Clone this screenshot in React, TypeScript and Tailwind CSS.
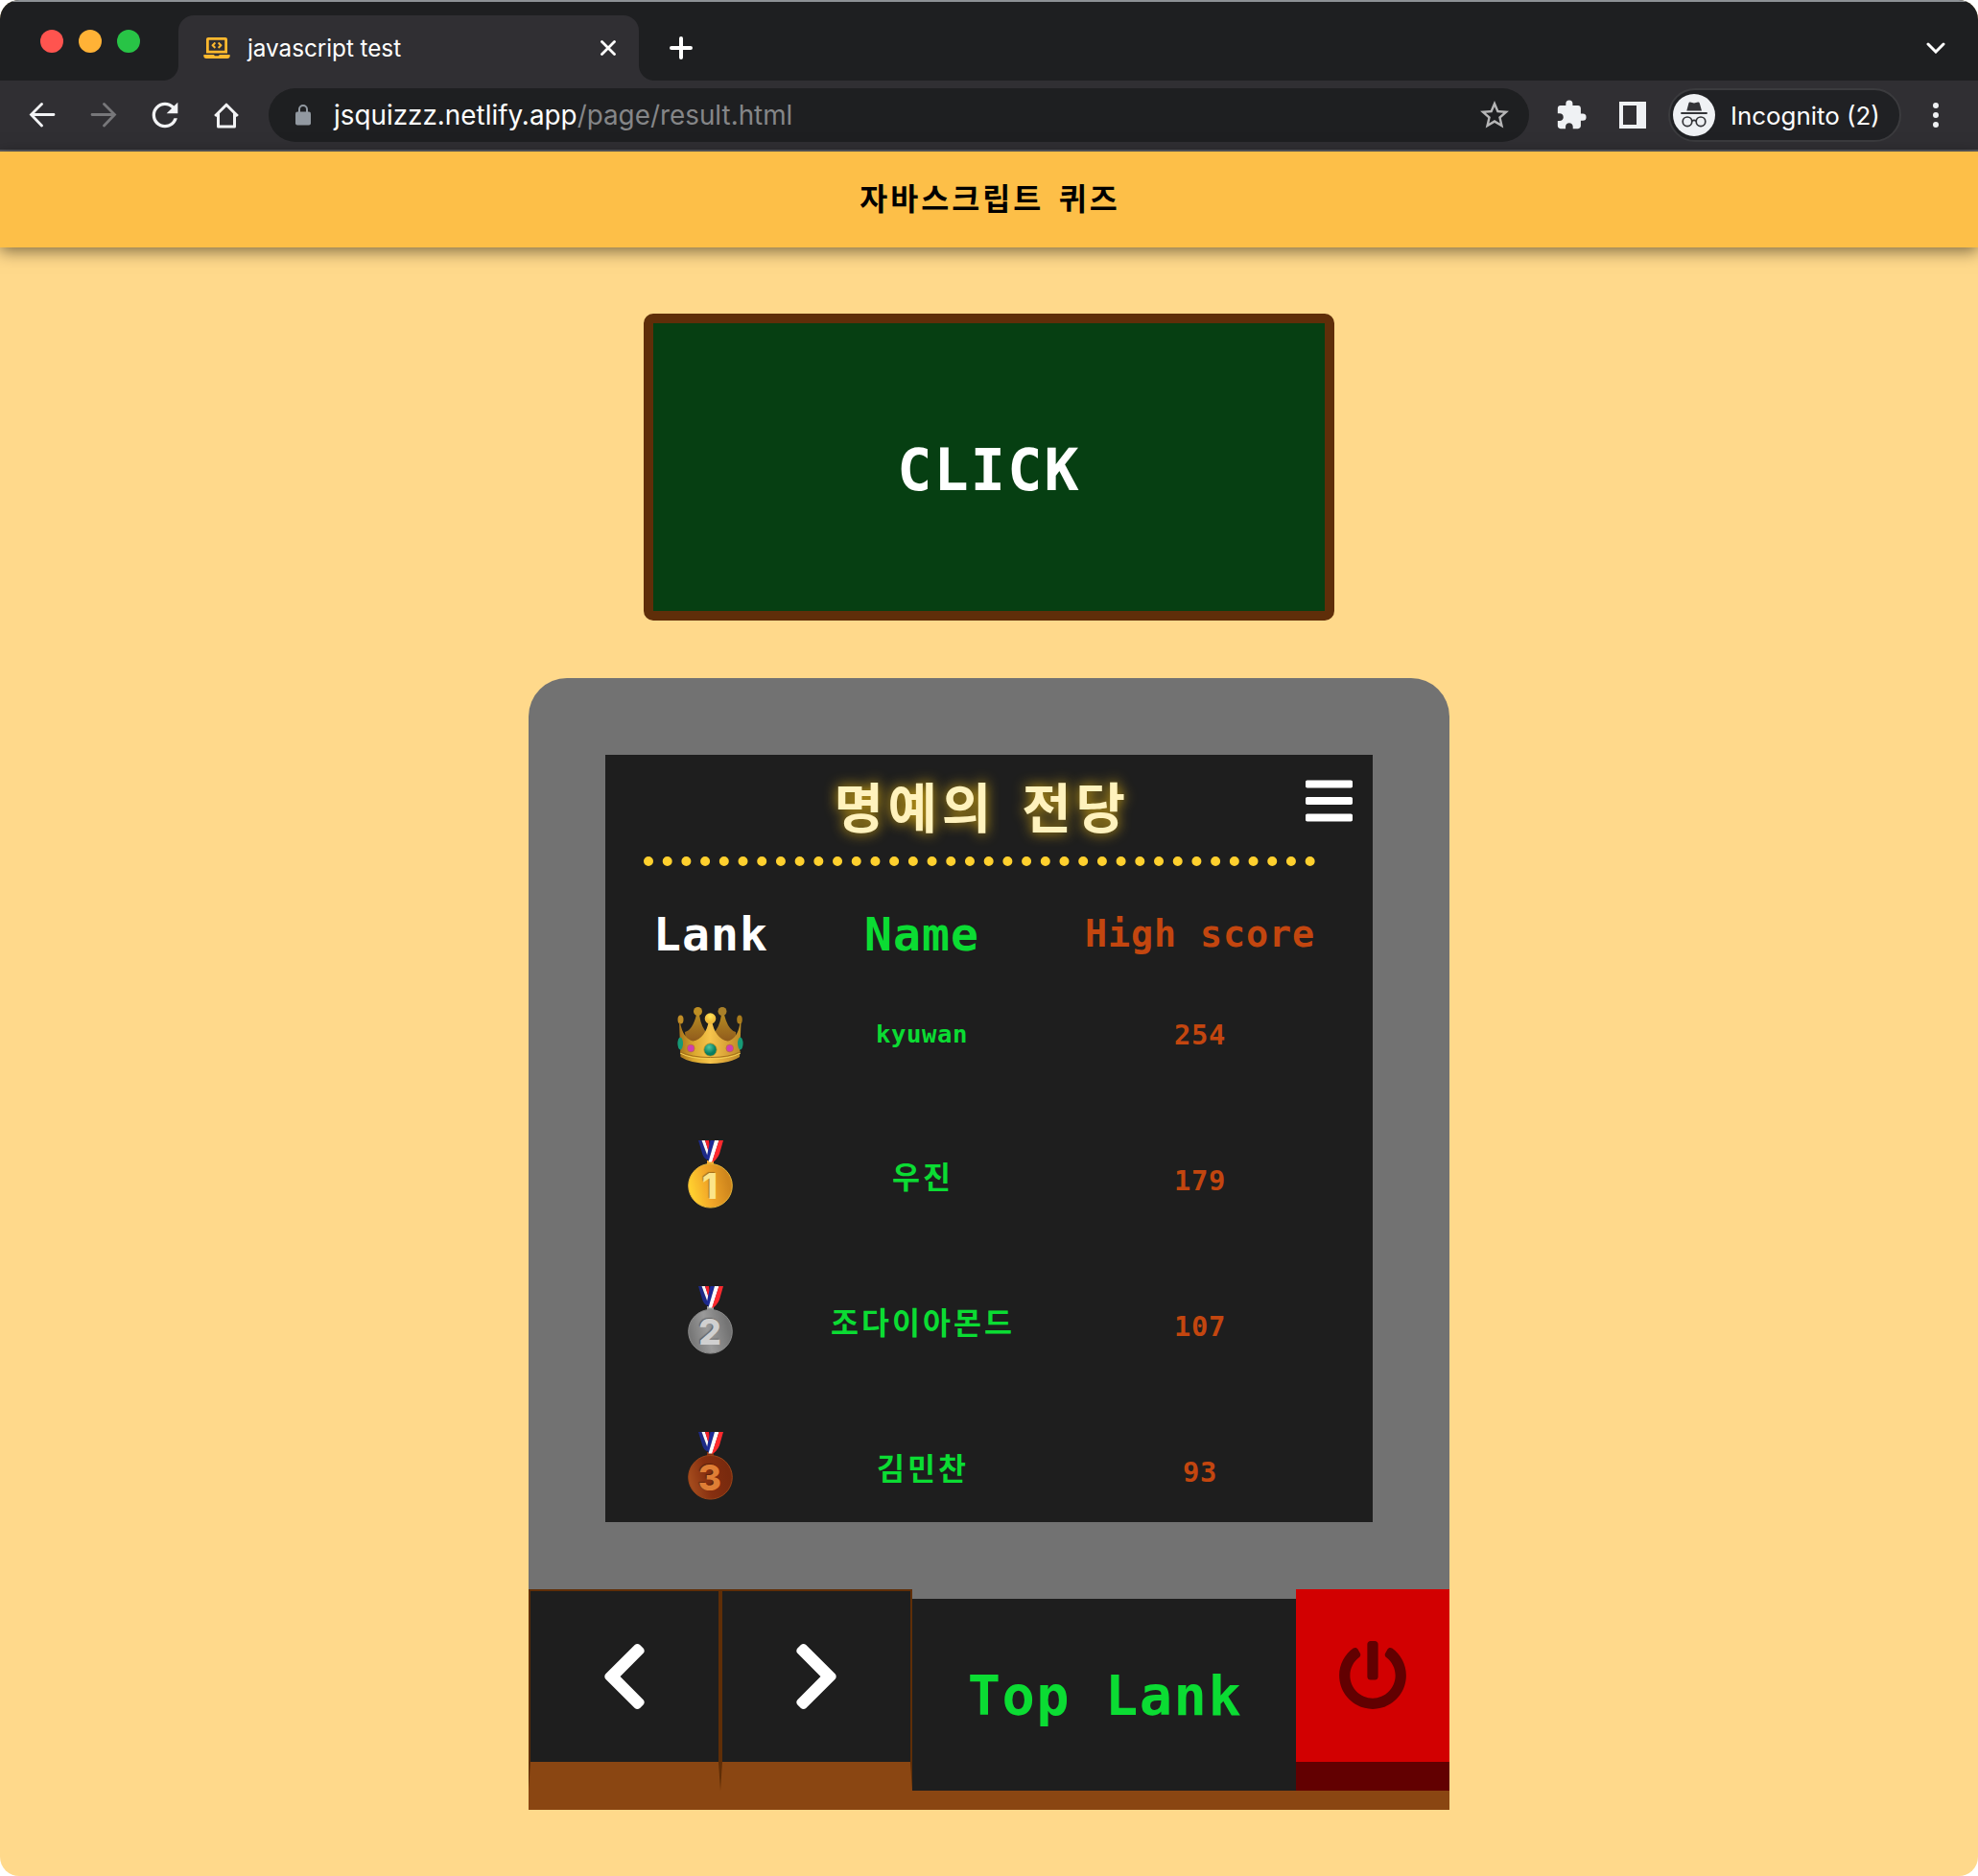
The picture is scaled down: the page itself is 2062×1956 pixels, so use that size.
import type { ReactNode } from "react";
import { FaBars, FaChevronLeft, FaChevronRight, FaLaptopCode, FaPowerOff } from "react-icons/fa";
import { MdExtension, MdOutlineStarBorder, MdRefresh } from "react-icons/md";

const MONO = "font-['DejaVu_Sans_Mono','Noto_Sans_CJK_KR',monospace]";
const HANGUL = "font-['Noto_Sans_CJK_KR',sans-serif]";
const UI = "font-['Inter',sans-serif]";

function TabStrip() {
  return (
    <div className="flex h-[84px] border-t-2 border-[#8d9195] bg-[#1e1f21]">
      <div className="flex w-[186px] items-start gap-4 pl-[42px] pt-[29px]">
        <span className="size-6 rounded-full bg-[#ff544f]" />
        <span className="size-6 rounded-full bg-[#ffb236]" />
        <span className="size-6 rounded-full bg-[#28c446]" />
      </div>
      <div className="relative mt-[14px] flex h-[68px] w-[480px] items-center rounded-t-2xl bg-[#302f33] pl-[26px] pr-6">
        <span className="absolute -left-4 bottom-0 size-4 bg-[radial-gradient(circle_at_0_0,#1e1f21_15.5px,#302f33_16.5px)]" />
        <span className="absolute -right-4 bottom-0 size-4 bg-[radial-gradient(circle_at_100%_0,#1e1f21_15.5px,#302f33_16.5px)]" />
        <FaLaptopCode className="h-[22px] w-[28px] text-[#ffb92e]" />
        <span className={`ml-[18px] text-[24.300px] leading-8 tracking-[-0.050px] text-white ${UI}`}>javascript test</span>
        <svg className="ml-auto size-4" viewBox="0 0 16 16" stroke="#fff" strokeWidth="2.8" strokeLinecap="round">
          <path d="M1.5 1.5l13 13M14.5 1.5l-13 13" />
        </svg>
      </div>
      <svg className="ml-8 mt-9 size-6" viewBox="0 0 24 24" stroke="#fff" strokeWidth="4" strokeLinecap="round">
        <path d="M12 2v20M2 12h20" />
      </svg>
      <svg className="ml-auto mr-[34px] mt-[42px] h-3 w-5" viewBox="0 0 20 12" fill="none" stroke="#fff" strokeWidth="3">
        <path d="M2 2l8 8 8-8" strokeLinecap="round" />
      </svg>
    </div>
  );
}

function IncognitoFace() {
  return (
    <svg className="size-11" viewBox="0 0 44 44">
      <circle cx="22" cy="22" r="22" fill="#eff1f4" />
      <path d="M18 8.6l4 1 4-1c1 0 1.6.5 1.9 1.4L30 17.5H14.300L16.300 10c.3-.9.800-1.400 1.700-1.400z" fill="#333438" />
      <path d="M8.300 20h27.400" stroke="#333438" strokeWidth="2" />
      <g fill="none" stroke="#333438" strokeWidth="1.700">
        <circle cx="15" cy="28.800" r="4.800" />
        <circle cx="29" cy="28.800" r="4.800" />
        <path d="M19.800 28.200q2.200-1.600 4.400 0" />
      </g>
    </svg>
  );
}

function Toolbar() {
  return (
    <div className="flex h-[74px] items-center border-b-2 border-[#5b5c60] bg-[#302f33]">
      <svg className="ml-[30px] h-[26px] w-7" viewBox="0 0 28 26" fill="none" stroke="#f2f3f5" strokeWidth="2.800" strokeLinecap="round">
        <path d="M26 12.500H3M13.500 1.500L2.500 12.500l11 11.500" />
      </svg>
      <svg className="ml-9 h-[26px] w-7" viewBox="0 0 28 26" fill="none" stroke="#77777a" strokeWidth="2.800" strokeLinecap="round">
        <path d="M2 12.500h23M14.500 1.500l11 11-11 11.500" />
      </svg>
      <MdRefresh className="ml-[30px] size-10 text-[#f2f3f5]" />
      <svg className="ml-[31px] h-[27px] w-[26px]" viewBox="0 0 26 27" fill="none" stroke="#f2f3f5" strokeWidth="3">
        <path d="M1.200 14L13 2.200 24.800 14M4.500 11.500v13.400h17V11.500" strokeLinejoin="round" />
      </svg>
      <div className="ml-[31px] flex h-14 w-[1314px] items-center rounded-full bg-[#1e1f21] pl-7 pr-[18px]">
        <svg className="h-[22px] w-4" viewBox="0 0 16 22">
          <path d="M4 9V5a4 4 0 0 1 8 0v4" fill="none" stroke="#9299a1" strokeWidth="2" />
          <rect y="7.500" width="16" height="14" rx="2" fill="#9299a1" />
        </svg>
        <span className={`ml-6 text-[27.850px] leading-10 text-white ${UI}`}>
          jsquizzz.netlify.app<span className="text-[#858688]">/page/result.html</span>
        </span>
        <MdOutlineStarBorder className="ml-auto size-9 text-[#b6b6b7]" />
      </div>
      <MdExtension className="ml-[27px] size-[34px] text-[#eff1f4]" />
      <svg className="ml-[33px] size-7" viewBox="0 0 28 28">
        <path fill="#eff1f4" fillRule="evenodd" d="M0 0h28v28H0zM4 4v20h14V4z" />
      </svg>
      <div className="ml-[23px] flex h-14 w-[243px] items-center rounded-full border-2 border-[#3b3b3e] bg-[#202124] pl-[3px]">
        <IncognitoFace />
        <span className={`ml-4 whitespace-nowrap pt-0.5 text-[25.900px] leading-10 text-white ${UI}`}>Incognito (2)</span>
      </div>
      <div className="ml-[33px] flex flex-col gap-1">
        <span className="size-1.5 rounded-full bg-[#eff1f4]" />
        <span className="size-1.5 rounded-full bg-[#eff1f4]" />
        <span className="size-1.5 rounded-full bg-[#eff1f4]" />
      </div>
    </div>
  );
}

function Crown() {
  return (
    <svg className="mr-px h-[59px] w-[69px]" viewBox="0 0 69 59">
      <defs>
        <linearGradient id="crownFront" x1="0" x2="1">
          <stop offset="0" stopColor="#a8731a" />
          <stop offset=".25" stopColor="#dca92f" />
          <stop offset=".5" stopColor="#f6c44c" />
          <stop offset=".8" stopColor="#d69f35" />
          <stop offset="1" stopColor="#b98a25" />
        </linearGradient>
        <linearGradient id="crownBack" x1="0" x2="0" y1="0" y2="1">
          <stop offset="0" stopColor="#b58a22" />
          <stop offset="1" stopColor="#8f5a1c" />
        </linearGradient>
        <radialGradient id="crownBall" cx=".5" cy=".3">
          <stop offset="0" stopColor="#ffe75a" />
          <stop offset="1" stopColor="#eeb93a" />
        </radialGradient>
        <radialGradient id="crownEmerald" cx=".4" cy=".3">
          <stop offset="0" stopColor="#4fc79f" />
          <stop offset="1" stopColor="#087d60" />
        </radialGradient>
      </defs>
      <path d="M8 26q8-2 12-18h3q2 14 9 20l3 8H9zM61 26q-8-2-12-18h-3q-2 14-9 20l-1 8h26z" fill="url(#crownBack)" />
      <circle cx="21.500" cy="4.500" r="4.500" fill="#bd8e23" />
      <circle cx="47" cy="4.500" r="4.500" fill="#a98029" />
      <ellipse cx="3.500" cy="13" rx="3" ry="4.500" fill="#c08d27" />
      <ellipse cx="65" cy="13" rx="2.800" ry="4.500" fill="#a97b1c" />
      <path
        d="M3 16q3 17 13.500 19.500C25 34 31 26 33 14h3c2 12 8 20 16.500 21.500C60 34 64 27 65.500 16h1l-1.500 36q-10 7-30.500 7T3.500 52L2 16z"
        fill="url(#crownFront)"
      />
      <path d="M3 48q11 6 31.500 6T66 48" fill="none" stroke="#f3cf52" strokeWidth="1" />
      <path d="M3 46.500q11 6 31.500 6T66 46.500" fill="none" stroke="#a8731a" strokeWidth="1" />
      <circle cx="34.500" cy="12" r="5.800" fill="url(#crownBall)" />
      <circle cx="34.500" cy="44.500" r="6.700" fill="url(#crownEmerald)" stroke="#c99424" strokeWidth=".8" />
      <circle cx="14.200" cy="43" r="3.900" fill="#cf3fae" stroke="#b57b1c" strokeWidth=".6" />
      <circle cx="54.800" cy="43" r="3.900" fill="#cf3fae" stroke="#b57b1c" strokeWidth=".6" />
      <ellipse cx="3.200" cy="38" rx="2.800" ry="6.500" fill="#169a76" />
      <ellipse cx="65.800" cy="38" rx="2.800" ry="6.500" fill="#169a76" />
    </svg>
  );
}

type MedalProps = { place: string; light: string; mid: string; dark: string; digit: string; edge: string };

function Medal({ place, light, mid, dark, digit, edge }: MedalProps) {
  const id = `medal-${place}`;
  return (
    <svg className="mb-[13px] mr-px h-[71px] w-[47px]" viewBox="0 0 47 71">
      <defs>
        <linearGradient id={id} x1=".1" y1=".8" x2=".95" y2=".6">
          <stop offset="0" stopColor={light} />
          <stop offset=".45" stopColor={mid} />
          <stop offset="1" stopColor={dark} />
        </linearGradient>
      </defs>
      <path d="M20 21h7v4h-7z" fill={mid} />
      <path d="M11 0h3.500l7 19-2 1q-3-2-4-5z" fill="#1d2a86" />
      <path d="M14.500 0h3.500l5 15-1.500 4z" fill="#f7f7fa" />
      <path d="M18 0h4l1 8-1 5z" fill="#f5202a" />
      <path d="M23.500 0H28l-6 22-2.500-4z" fill="#1d2a96" />
      <path d="M28 0h4.500l-7 22.500H21.500z" fill="#fff" />
      <path d="M32.500 0H37l-4 14q-3 7-8 9z" fill="#ff2a2e" />
      <circle cx="23.500" cy="47.300" r="22.800" fill={`url(#${id})`} stroke={edge} strokeWidth="1" />
      <text
        x="23"
        y="60.500"
        textAnchor="middle"
        fill={digit}
        className="font-['Inter',sans-serif] text-[37px] font-extrabold [text-shadow:-1px_-1px_1px_rgba(0,0,0,0.3)]"
      >
        {place}
      </text>
    </svg>
  );
}

type Row = { icon: ReactNode; name: string; latin?: boolean; score: string };

const rows: Row[] = [
  { icon: <Crown />, name: "kyuwan", latin: true, score: "254" },
  { icon: <Medal place="1" light="#ffd02f" mid="#f2a728" dark="#cf861d" digit="#fbe48a" edge="#e8b637" />, name: "우진", score: "179" },
  { icon: <Medal place="2" light="#777" mid="#9a9a9a" dark="#747474" digit="#d0d0d0" edge="#8b8b8b" />, name: "조다이아몬드", score: "107" },
  { icon: <Medal place="3" light="#a34a1c" mid="#862f10" dark="#792a0e" digit="#df7e35" edge="#9c4518" />, name: "김민찬", score: "93" },
];

function Screen() {
  return (
    <div className="relative h-[800px] w-[800px] overflow-hidden bg-[#1e1e1e] px-10">
      <h1
        className={`flex h-[116px] w-[700px] items-start justify-center border-b-[10px] border-dotted border-[#ffd02e] pl-[5px] pt-[24px] text-[56px] font-bold leading-[56px] tracking-[4.500px] text-[#fff2bd] [word-spacing:10.500px] [text-shadow:0_0_14px_#d9ac14] ${HANGUL}`}
      >
        명예의 전당
      </h1>
      <FaBars className="absolute right-[21px] top-5 h-14 w-[49px] text-white" />
      <div className={`mt-[42px] grid h-[58px] grid-cols-[140px_300px_280px] items-center justify-items-center font-bold ${MONO}`}>
        <span className="text-[48px] leading-none tracking-[1.100px] text-white">Lank</span>
        <span className="text-[48px] leading-none tracking-[1.100px] text-[#0bdc33]">Name</span>
        <span className="whitespace-nowrap text-[38.400px] leading-none tracking-[0.880px] text-[#c3460f]">High score</span>
      </div>
      {rows.map((row) => (
        <div key={row.name} className="grid h-[152px] grid-cols-[140px_300px_280px] items-center justify-items-center">
          <div>{row.icon}</div>
          {row.latin ? (
            <span className={`text-[25.600px] font-bold leading-none tracking-[0.590px] text-[#0bdc33] ${MONO}`}>{row.name}</span>
          ) : (
            <span className={`pb-2.5 pl-0.5 text-[31.500px] font-bold leading-none tracking-[3.020px] text-[#0bdc33] ${HANGUL}`}>{row.name}</span>
          )}
          <span className={`text-[28.800px] font-bold leading-none tracking-[0.700px] text-[#c3460f] ${MONO}`}>{row.score}</span>
        </div>
      ))}
    </div>
  );
}

function Controls() {
  return (
    <div className="flex h-[220px] border-b-[20px] border-[#8a4612] bg-[#8a4612]">
      {[FaChevronLeft, FaChevronRight].map((Icon, i) => (
        <button
          key={i}
          className="-mt-[10px] flex h-[210px] w-[200px] items-center justify-center border-2 border-b-[30px] border-[#5f2e07] border-b-[#8a4612] bg-[#1e1e1e]"
        >
          <Icon className="h-20 w-[50px] text-white" />
        </button>
      ))}
      <div className={`flex w-[400px] items-center justify-center bg-[#1e1e1e] pl-0.5 pt-[4px] text-[57px] font-bold tracking-[1.500px] text-[#0bdc33] ${MONO}`}>
        Top Lank
      </div>
      <button className="-mt-[10px] flex h-[210px] w-[160px] items-center justify-center border-b-[30px] border-[#620001] bg-[#d20001]">
        <FaPowerOff className="size-[72px] text-[#620001]" />
      </button>
    </div>
  );
}

export default function App() {
  return (
    <div className="h-[1956px] w-[2062px] bg-white">
      <div className="flex h-full flex-col overflow-hidden rounded-[20px] bg-[#ffd98b]">
        <TabStrip />
        <Toolbar />
        <header
          className={`flex h-[100px] shrink-0 items-center justify-center bg-[#fdbf48] pb-[5px] pl-[2px] text-[31.500px] font-bold tracking-[3.020px] text-black shadow-[0_4px_16px_rgba(0,0,0,0.5)] [word-spacing:5.500px] ${HANGUL}`}
        >
          자바스크립트 퀴즈
        </header>
        <main className="flex flex-col items-center pt-[69px]">
          <div
            className={`flex h-80 w-[720px] items-center justify-center rounded-[10px] border-[10px] border-[#5f2e09] bg-[#063f12] pt-[5px] text-[60px] font-bold tracking-[2.200px] text-white ${MONO}`}
          >
            CLICK
          </div>
          <div className="mt-[60px] w-[960px]">
            <div className="h-[960px] rounded-t-[40px] bg-[#727272] p-20">
              <Screen />
            </div>
            <Controls />
          </div>
        </main>
      </div>
    </div>
  );
}
